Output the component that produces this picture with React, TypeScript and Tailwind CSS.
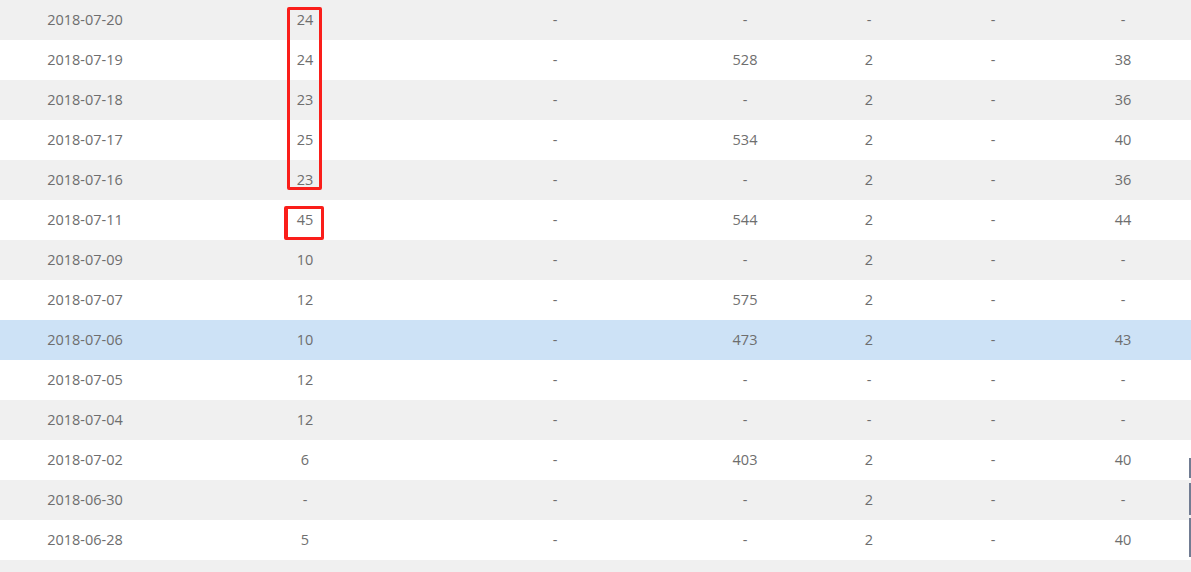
import React from "react";

const rows: string[][] = [
  ["2018-07-20", "24", "-", "-", "-", "-", "-"],
  ["2018-07-19", "24", "-", "528", "2", "-", "38"],
  ["2018-07-18", "23", "-", "-", "2", "-", "36"],
  ["2018-07-17", "25", "-", "534", "2", "-", "40"],
  ["2018-07-16", "23", "-", "-", "2", "-", "36"],
  ["2018-07-11", "45", "-", "544", "2", "-", "44"],
  ["2018-07-09", "10", "-", "-", "2", "-", "-"],
  ["2018-07-07", "12", "-", "575", "2", "-", "-"],
  ["2018-07-06", "10", "-", "473", "2", "-", "43"],
  ["2018-07-05", "12", "-", "-", "-", "-", "-"],
  ["2018-07-04", "12", "-", "-", "-", "-", "-"],
  ["2018-07-02", "6", "-", "403", "2", "-", "40"],
  ["2018-06-30", "-", "-", "-", "2", "-", "-"],
  ["2018-06-28", "5", "-", "-", "2", "-", "40"],
];

const widths = ["w-[170px]", "w-[270px]", "w-[230px]", "w-[150px]", "w-[98px]", "w-[150px]", "w-[110px]"];

export default function App() {
  return (
    <div
      className="relative w-[1191px] h-[572px] overflow-hidden bg-[#f0f0f0] text-[14.5px] text-[#6e6e6e]"
      style={{ fontFamily: '"Open Sans", "Noto Sans", sans-serif' }}
    >
      {rows.map((r, i) => {
        const bg = i === 8 ? "bg-[#cde2f6]" : i % 2 === 0 ? "bg-[#f0f0f0]" : "bg-white";
        return (
          <div key={i} className={`flex h-[40px] items-center pb-[1px] ${bg}`}>
            {r.map((c, j) => (
              <div key={j} className={`${widths[j]} shrink-0 text-center`}>
                {c}
              </div>
            ))}
          </div>
        );
      })}
      <div className="absolute left-[287px] top-[7px] w-[35px] h-[183px] border-[3px] border-[#fa1e1a] rounded-[2px]" />
      <div className="absolute left-[284px] top-[206px] w-[40px] h-[34px] border-[3px] border-l-[4px] border-[#fa1e1a] rounded-[2px]" />
      <div className="absolute right-0 top-[458px] w-[2px] h-[20px] bg-[#717c92]" />
      <div className="absolute right-0 top-[483px] w-[2px] h-[32px] bg-[#717c92]" />
      <div className="absolute right-0 top-[518px] w-[2px] h-[39px] bg-[#717c92]" />
    </div>
  );
}
